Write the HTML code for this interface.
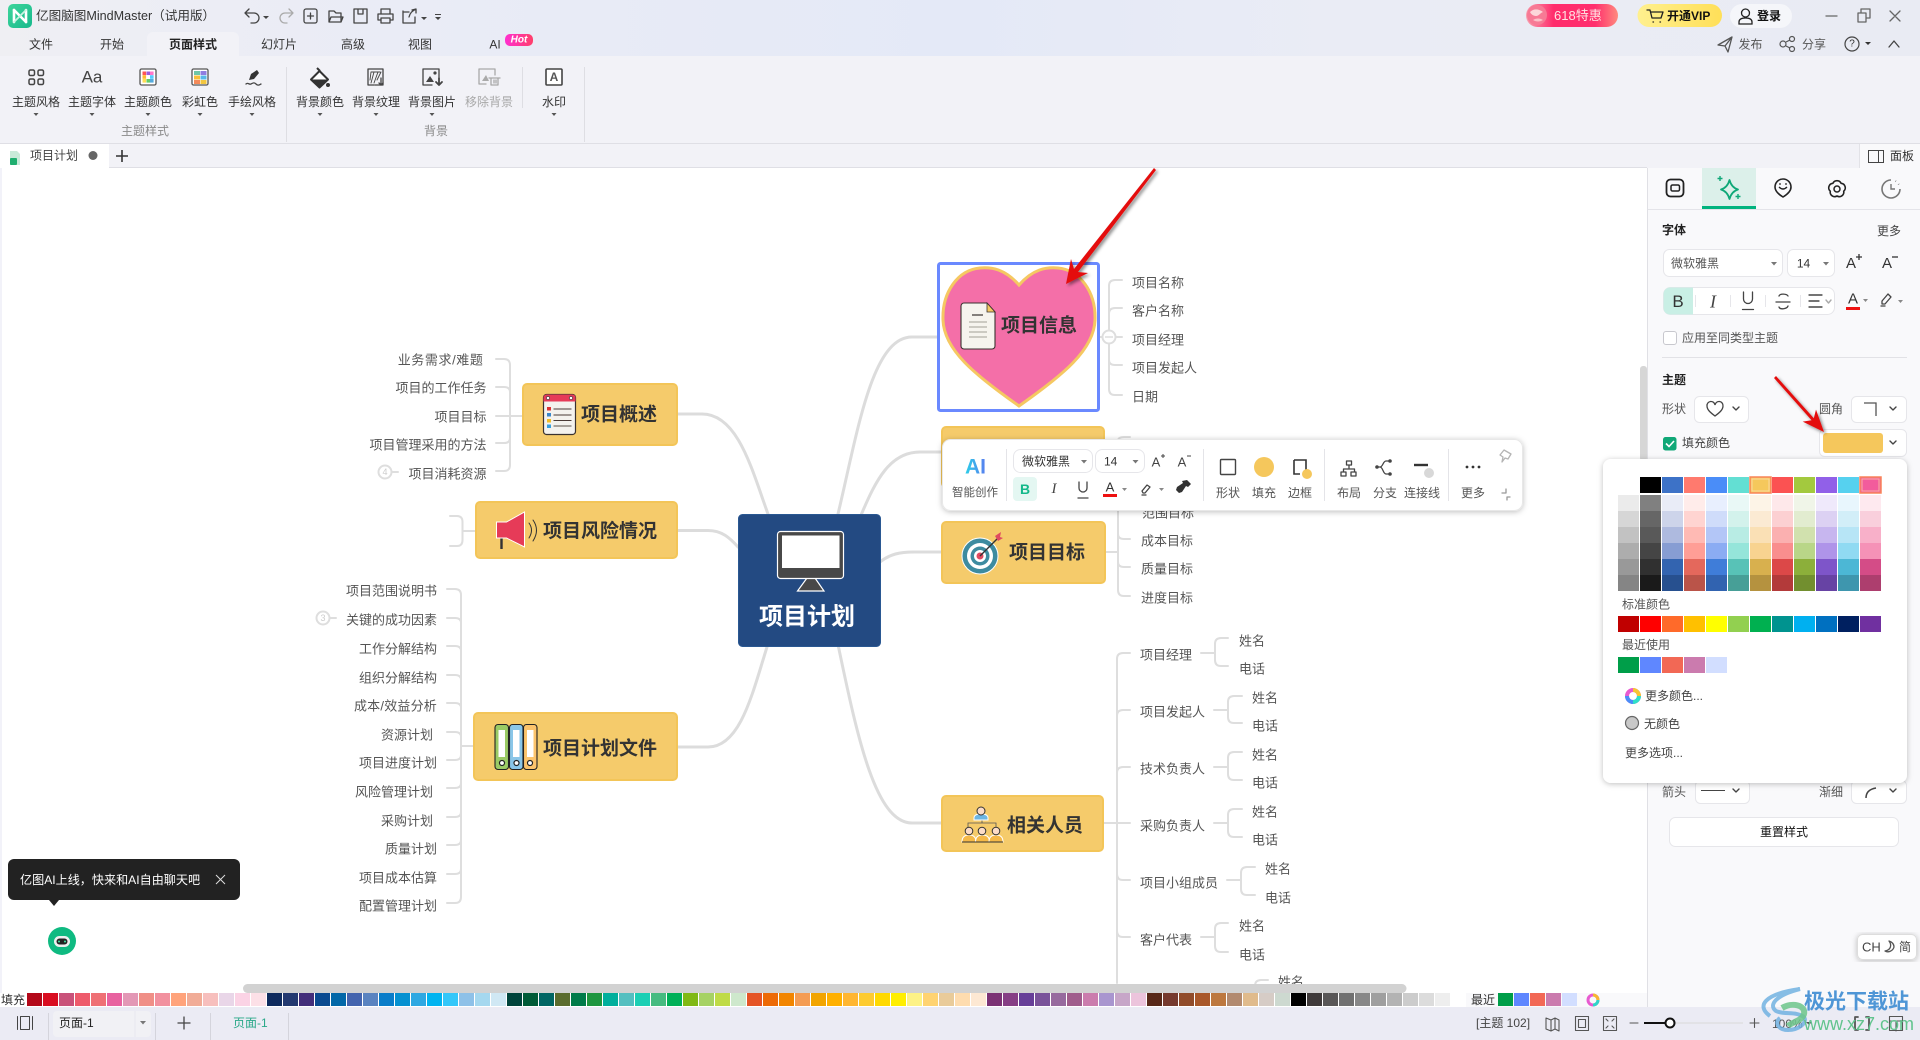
<!DOCTYPE html>
<html><head><meta charset="utf-8"><title>亿图脑图MindMaster</title>
<style>
html,body{margin:0;padding:0;width:1920px;height:1040px;overflow:hidden;background:#fff}
svg{display:block;font-family:"Liberation Sans","Noto Sans CJK SC",sans-serif}
text{dominant-baseline:central;font-size:12px;fill:#333;white-space:pre}
.mid{text-anchor:middle}.end{text-anchor:end}
.b{font-weight:bold}
.m{font-size:13px;fill:#555;transform:translateY(.8px)}
.n{font-size:19px;font-weight:bold;fill:#333;transform:translateY(1px)}
.l{fill:none;stroke:#dcdcdc;stroke-width:3;stroke-linecap:round}
.k{fill:none;stroke:#dedede;stroke-width:2;stroke-linecap:round}
.i{fill:none;stroke:#444;stroke-width:1.3;stroke-linecap:round;stroke-linejoin:round}
.node{fill:#f5cb6b;stroke:#f3c558;stroke-width:2}
.c1{width:15px;height:13px}
.p{width:21px;height:16px}
.ctl{fill:#fff;stroke:#e6e6ea}
.chev{fill:none;stroke:#444;stroke-width:1.4;stroke-linecap:round;stroke-linejoin:round}
</style></head><body>
<svg width="1920" height="1040" viewBox="0 0 1920 1040" xmlns="http://www.w3.org/2000/svg">
<defs>
<linearGradient id="tb" x1="0" x2="1" y1="0" y2="0"><stop offset="0" stop-color="#efeff3"/><stop offset=".1" stop-color="#ecedf5"/><stop offset=".5" stop-color="#e4e9f7"/><stop offset=".7" stop-color="#eaecf5"/><stop offset="1" stop-color="#e9ebf3"/></linearGradient>
<linearGradient id="lg" x1="0" x2="1" y1="0" y2="1"><stop offset="0" stop-color="#3fd59b"/><stop offset="1" stop-color="#16b98c"/></linearGradient>
<linearGradient id="hot" x1="0" x2="1"><stop offset="0" stop-color="#ff2fd0"/><stop offset="1" stop-color="#ff3f6a"/></linearGradient>
<linearGradient id="b618" x1="0" x2="1"><stop offset="0" stop-color="#f8a0ae"/><stop offset=".3" stop-color="#ff2c6c"/><stop offset=".75" stop-color="#ff2f6d"/><stop offset="1" stop-color="#ff8a7e"/></linearGradient>
<linearGradient id="vip" x1="0" x2="1"><stop offset="0" stop-color="#fff08f"/><stop offset="1" stop-color="#ffdf58"/></linearGradient>
<linearGradient id="ai" x1="0" x2="1"><stop offset="0" stop-color="#2bd0e8"/><stop offset="1" stop-color="#5a7cf0"/></linearGradient>
<filter id="sh" x="-10%" y="-10%" width="120%" height="120%"><feDropShadow dx="0" dy="1" stdDeviation="3" flood-color="#000" flood-opacity=".25"/></filter>
<filter id="ar" x="-30%" y="-30%" width="160%" height="160%"><feDropShadow dx="2" dy="2" stdDeviation="1.500" flood-color="#000" flood-opacity=".45"/></filter>
</defs>

<!-- backgrounds -->
<rect width="1920" height="56" fill="url(#tb)"/>
<rect y="56" width="1920" height="87" fill="#f2f2f7"/>
<rect y="143" width="1920" height="25" fill="#f2f2f7"/>
<rect y="143" width="1920" height="1" fill="#dfdfe5"/>
<rect x="0" y="168" width="1648" height="839" fill="#fff"/>
<rect x="0" y="168" width="2" height="839" fill="#f2f2f9"/>
<rect x="1648" y="168" width="272" height="839" fill="#f9f9fb"/>
<rect x="1647" y="168" width="1" height="839" fill="#e0e0e5"/>
<rect y="167" width="1647" height="1" fill="#dfdfe5"/>

<!-- title -->
<rect x="8" y="4" width="24" height="24" rx="5" fill="url(#lg)"/>
<path d="M14 22V10M26 22V10" stroke="#fff" stroke-width="2.600" stroke-linecap="round"/><path d="M14 10l12 12" stroke="#fff" stroke-width="2.600" stroke-linecap="round"/><path d="M26 10l-12 12" stroke="#c9f3e2" stroke-width="1.800" stroke-linecap="round"/>
<text x="36" y="16" style="font-size:12.600px">亿图脑图MindMaster（试用版）</text>
<path class="i" d="M248 12l-4 4 4 4M244 16h9a5 5 0 0 1 0 10h-3" transform="translate(1 -3)"/>
<path d="M263 16h6l-3 3z" fill="#444"/>
<path class="i" style="stroke:#aaa" d="M289 12l4 4-4 4M293 16h-8a5 5 0 0 0 0 10h2" transform="translate(0 -3)"/>
<g class="i"><rect x="304" y="9" width="13" height="14" rx="2"/><path d="M310.500 13v6M307.500 16h6"/>
<path d="M329 22V11h5l2 2h5v9zM329 22l2-5h12l-2 5"/>
<path d="M354 9h13v14h-13zM358 9v5h5V9"/>
<path d="M381 14V9h9v5M378 14h15v6h-3M381 20h-3v-6M381 18h9v5h-9z"/>
<path d="M404 12h5M416 9l-4 1M416 9v4M403 11v12h12v-6M409 17c1-4 3-6 7-8"/></g>
<path d="M421 17h6l-3 3zM435 14h6v1h-6zM435 17h6l-3 3z" fill="#444"/>

<!-- tabs -->
<path d="M147 56V38a6 6 0 0 1 6-6h80a6 6 0 0 1 6 6v18z" fill="#f2f2f7"/>
<text class="mid" x="41" y="44.500">文件</text>
<text class="mid" x="112" y="44.500">开始</text>
<text class="mid b" x="193" y="44.500" style="fill:#222">页面样式</text>
<text class="mid" x="279" y="44.500">幻灯片</text>
<text class="mid" x="353" y="44.500">高级</text>
<text class="mid" x="420" y="44.500">视图</text>
<text class="mid" x="495" y="44.500">AI</text>
<rect x="505" y="34" width="28" height="12" rx="5" fill="url(#hot)"/>
<text class="mid b" x="519" y="40" style="font-size:10px;fill:#fff;font-style:italic">Hot</text>

<!-- top right -->
<rect x="1526" y="4" width="92" height="23" rx="11.500" fill="url(#b618)"/>
<circle cx="1537" cy="15" r="10" fill="#f77a95"/><path d="M1530 12c4-4 9-3 13 0-3 1-4 4-7 4s-5-2-6-4z" fill="#fcd6d9"/><path d="M1533 20c3-2 7-2 10 0-3 2-7 2-10 0z" fill="#fcc0c8"/>
<text x="1554" y="15.500" style="font-size:13px;fill:#ffe3e3">618特惠</text>
<rect x="1637.500" y="4" width="84.500" height="23" rx="11.500" fill="url(#vip)"/>
<path class="i" style="stroke:#222" d="M1647 10h3l2 8h9l2-6h-12M1653 22h.5M1660 22h.5"/>
<text class="b" x="1667" y="16" style="fill:#111">开通VIP</text>
<rect x="1730" y="4" width="62" height="24" rx="12" fill="#f5f6fa"/>
<circle cx="1745.500" cy="13" r="4" fill="none" stroke="#222" stroke-width="1.300"/><path d="M1739 24v-2c0-3 3-4 6.500-4s6.500 1 6.500 4v2z" fill="none" stroke="#222" stroke-width="1.300"/>
<text class="mid b" x="1769" y="16" style="fill:#111">登录</text>
<path class="i" style="stroke:#666" d="M1826 16h11M1858 13h8v9h-8zM1861 13v-4h9v9h-4M1890 11l10 10M1900 11l-10 10"/>
<path class="i" style="stroke:#555" d="M1718 45l14-8-4 15-3-6zM1725 46l7-9"/>
<text class="mid" x="1750.500" y="44.500" style="fill:#555">发布</text>
<g fill="none" stroke="#555" stroke-width="1.200"><circle cx="1783" cy="44" r="3"/><circle cx="1792" cy="39" r="2.500"/><circle cx="1792" cy="49" r="2.500"/><path d="M1786 42l4-2M1786 46l4 2"/></g>
<text class="mid" x="1814" y="44.500" style="fill:#555">分享</text>
<circle cx="1852" cy="44" r="7" fill="none" stroke="#444" stroke-width="1.200"/><text class="mid" x="1852" y="44" style="font-size:10px">?</text>
<path d="M1865 42h6l-3 3z" fill="#333"/>
<path class="i" d="M1889 47l5-6 5 6"/>

<!-- ribbon icons -->
<g class="i" style="stroke-width:1.500">
<rect x="29" y="70" width="5.500" height="5.500" rx="1.500"/><rect x="38" y="70" width="5.500" height="5.500" rx="1.500"/><rect x="29" y="79" width="5.500" height="5.500" rx="1.500"/><rect x="38" y="79" width="5.500" height="5.500" rx="1.500"/>
</g>
<text class="mid" x="92" y="77" style="font-size:17px;fill:#444">Aa</text>
<rect x="140" y="69" width="16" height="16" rx="1.500" fill="#fff" stroke="#555" stroke-width="1.300"/>
<g>
<rect x="142.500" y="71.500" width="3.600" height="3.600" fill="#f55"/><rect x="146.500" y="71.500" width="3.600" height="3.600" fill="#9c5ce0"/><rect x="150" y="71.500" width="3.600" height="3.600" fill="#f7c"/>
<rect x="142.500" y="75.200" width="3.600" height="3.600" fill="#fb3"/><rect x="146.500" y="75.200" width="3.600" height="3.600" fill="#fff"/><rect x="150" y="75.200" width="3.600" height="3.600" fill="#5cf"/>
<rect x="142.500" y="79" width="3.600" height="3.600" fill="#fd5"/><rect x="146.500" y="79" width="3.600" height="3.600" fill="#6c6"/><rect x="150" y="79" width="3.600" height="3.600" fill="#5ad"/>
</g>
<rect x="192" y="69" width="16" height="16" rx="1.500" fill="#fff" stroke="#555" stroke-width="1.300"/>
<rect x="194" y="71" width="6" height="4" fill="#6dc6a8"/><rect x="200.500" y="71" width="6" height="4" fill="#8f7de0"/><rect x="194" y="75.500" width="6" height="4" fill="#f7bf3a"/><rect x="200.500" y="75.500" width="6" height="4" fill="#58b8e8"/><rect x="194" y="80" width="6" height="4" fill="#f58a5a"/><rect x="200.500" y="80" width="6" height="4" fill="#f3c63f"/>
<path d="M249 80l2-6 6-4 2 3-5 6z" fill="#333"/><path class="i" d="M246 84c2-2 3 1 5 0s3-2 5 0 3 1 5 0"/>
<path d="M319.500 71l8.500 8.500-8.500 8-8.500-8z" fill="#fff" stroke="#333" stroke-width="2" stroke-linejoin="round"/><path d="M311 79.500h17l-8.500 8z" fill="#333"/><path d="M317 68l3 3" stroke="#333" stroke-width="2"/><circle cx="328" cy="85" r="2" fill="#333"/>
<path class="i" d="M368 69h15v16h-8M368 69v16h6"/><path d="M371 72l9 0M371 72l-1 8M374 72l-3 11M378 72l-4 11M381 72l-4 8" class="i" style="stroke-width:.9"/><path class="i" d="M381 78v7M379 83l2 2 2-2"/>
<path class="i" d="M423 69h16v8M423 69v16h9"/><path d="M426 82l4-6 4 6z" fill="#444"/><circle cx="435" cy="73" r="1.600" fill="#444"/><path class="i" style="stroke-width:1.800" d="M439 78v7M436 82l3 3 3-3"/>
<path class="i" style="stroke:#a8a8a8" d="M479 69h16v6M479 69v15h7"/><path d="M482 81l4-6 3 6z" fill="#aaa"/><path class="i" style="stroke:#a8a8a8" d="M489 78h11M491 78v7h7v-7M494 80v3M496 80v3"/>
<rect x="546" y="69" width="16" height="16" rx="1" fill="#fff" stroke="#444" stroke-width="1.600"/>
<text class="mid b" x="554" y="77" style="font-size:12px;fill:#555">A</text>

<g style="font-size:12px">
<text class="mid" x="36" y="102">主题风格</text><text class="mid" x="92" y="102">主题字体</text><text class="mid" x="148" y="102">主题颜色</text><text class="mid" x="200" y="102">彩虹色</text><text class="mid" x="252" y="102">手绘风格</text>
<text class="mid" x="320" y="102">背景颜色</text><text class="mid" x="376" y="102">背景纹理</text><text class="mid" x="432" y="102">背景图片</text><text class="mid" x="489" y="102" style="fill:#a8a8a8">移除背景</text><text class="mid" x="554" y="102">水印</text>
<text class="mid" x="145" y="131" style="fill:#8a8a8a">主题样式</text><text class="mid" x="436" y="131" style="fill:#8a8a8a">背景</text>
</g>
<path fill="#555" d="M33.500 113h5l-2.500 3zM89.500 113h5l-2.500 3zM145.500 113h5l-2.500 3zM197.500 113h5l-2.500 3zM249.500 113h5l-2.500 3zM317.500 113h5l-2.500 3zM373.500 113h5l-2.500 3zM429.500 113h5l-2.500 3zM551.500 113h5l-2.500 3z"/>
<path stroke="#dedee3" d="M286.500 67v75M522.500 67v41M584.500 67v75"/>

<!-- doc tab -->
<rect x="0" y="144" width="109" height="24" fill="#fff"/>
<path d="M10 151h7l3 3v11H10z" fill="#c9ead9"/><rect x="10" y="158" width="7" height="7" rx="1" fill="#1fae6f"/>
<text x="30" y="155.500" style="fill:#444">项目计划</text>
<circle cx="93" cy="155.500" r="4.500" fill="#666"/>
<path d="M122 150v12M116 156h12" stroke="#333" stroke-width="1.600"/>
<rect x="1859" y="144" width="61" height="24" fill="#f9f9fb"/><rect x="1859" y="144" width="1" height="24" fill="#e2e2e7"/>
<rect x="1868.500" y="150.500" width="15" height="12" fill="none" stroke="#444"/><path d="M1878.500 150.500v12" stroke="#444"/>
<text x="1890" y="156" style="fill:#333">面板</text>

<!-- connectors main -->
<path class="l" d="M678 414H702C738 414 752 470 768 514"/>
<path class="l" d="M678 530.500H708C722 530.500 730 538 738 547"/>
<path class="l" d="M678 747H708C740 747 752 695 767 647"/>
<path class="l" d="M838 514C858 430 872 337 912 337H942"/>
<path class="l" d="M861.500 514C876 480 890 452 920 452H942"/>
<path class="l" d="M880 562C890 554 900 552 914 552H942"/>
<path class="l" d="M838.500 647C858 740 876 823 912 823H942"/>

<!-- left branches -->
<g>
<path class="k" d="M496 359H504Q510 359 510 365V465Q510 471 504 471H496M496 387H504Q510 387 510 392M496 416H522M496 443H504Q510 443 510 438"/>
<circle cx="385" cy="472" r="6.500" fill="#fff" stroke="#dedede" stroke-width="2"/><text class="mid" x="385" y="472" style="font-size:9px;fill:#ccc">4</text><path class="k" d="M391.500 472H398"/>
<text class="m end" x="483.500" y="359" style="letter-spacing:.6px">业务需求/难题</text>
<text class="m end" x="486.500" y="387">项目的工作任务</text>
<text class="m end" x="486.500" y="416">项目目标</text>
<text class="m end" x="486.500" y="444">项目管理采用的方法</text>
<text class="m end" x="486.500" y="473">项目消耗资源</text>
<path class="k" d="M450 516H457Q462.500 516 462.500 522V540Q462.500 546 457 546H450M462.500 531H475"/>
<path class="k" d="M447 589H455Q461 589 461 595V897Q461 903 455 903H447M447 618H455Q461 618 461 623M447 646H455Q461 646 461 651M447 675H455Q461 675 461 680M447 703H455Q461 703 461 708M447 732H455Q461 732 461 737M447 760H455Q461 760 461 755M447 788H455Q461 788 461 783M447 817H455Q461 817 461 812M447 845H455Q461 845 461 840M447 874H455Q461 874 461 869M461 746H473"/>
<circle cx="323" cy="618" r="6.500" fill="#fff" stroke="#dedede" stroke-width="2"/><text class="mid" x="323" y="618" style="font-size:9px;fill:#ccc">3</text><path class="k" d="M329.500 618H336"/>
<text class="m end" x="437" y="590">项目范围说明书</text>
<text class="m end" x="437" y="619">关键的成功因素</text>
<text class="m end" x="437" y="648">工作分解结构</text>
<text class="m end" x="437" y="677">组织分解结构</text>
<text class="m end" x="437" y="705" style="letter-spacing:.2px">成本/效益分析</text>
<text class="m end" x="433" y="734">资源计划</text>
<text class="m end" x="437" y="762">项目进度计划</text>
<text class="m end" x="433" y="791">风险管理计划</text>
<text class="m end" x="433" y="820">采购计划</text>
<text class="m end" x="437" y="848">质量计划</text>
<text class="m end" x="437" y="877">项目成本估算</text>
<text class="m end" x="437" y="905">配置管理计划</text>
</g>

<!-- right branches -->
<path class="k" d="M1122 280H1115Q1109 280 1109 286V389Q1109 395 1115 395H1122M1122 308H1115Q1109 308 1109 314M1122 337H1095M1122 365H1115Q1109 365 1109 360"/>
<circle cx="1109" cy="337" r="6.500" fill="#fff" stroke="#dedede" stroke-width="2"/><path d="M1105 337h8" stroke="#ccc"/>
<text class="m" x="1132" y="282">项目名称</text><text class="m" x="1132" y="310">客户名称</text><text class="m" x="1132" y="339">项目经理</text><text class="m" x="1132" y="367">项目发起人</text><text class="m" x="1132" y="396">日期</text>

<path class="k" d="M1118 511V590Q1118 596 1124 596H1130M1130 539H1124Q1118 539 1118 534M1130 567H1124Q1118 567 1118 562M1105 552H1118"/>
<path class="k" d="M1118 445V441Q1118 437 1124 437H1130"/>
<text class="m" x="1142" y="512">范围目标</text><text class="m" x="1141" y="540">成本目标</text><text class="m" x="1141" y="568">质量目标</text><text class="m" x="1141" y="597">进度目标</text>

<path class="k" d="M1104 823H1130M1130 653H1123Q1117 653 1117 659V983M1130 710H1123Q1117 710 1117 716M1130 767H1123Q1117 767 1117 773M1130 880H1123Q1117 880 1117 874M1130 937H1123Q1117 937 1117 931"/>
<text class="m" x="1140" y="654">项目经理</text><text class="m" x="1140" y="711">项目发起人</text><text class="m" x="1140" y="768">技术负责人</text><text class="m" x="1140" y="825">采购负责人</text><text class="m" x="1140" y="882">项目小组成员</text><text class="m" x="1140" y="939">客户代表</text>
<path class="k" d="M1201 653H1215M1228 638H1221Q1215 638 1215 644V660Q1215 666 1221 666H1228"/>
<path class="k" d="M1214 710H1228M1242 696H1234Q1228 696 1228 702V717Q1228 723 1234 723H1242"/>
<path class="k" d="M1214 767H1228M1242 752H1234Q1228 752 1228 758V774Q1228 780 1234 780H1242"/>
<path class="k" d="M1214 823H1228M1242 809H1234Q1228 809 1228 815V831Q1228 837 1234 837H1242"/>
<path class="k" d="M1227 880H1241M1255 867H1247Q1241 867 1241 873V889Q1241 895 1247 895H1255"/>
<path class="k" d="M1201 937H1215M1228 923H1221Q1215 923 1215 929V946Q1215 952 1221 952H1228"/>
<path class="k" d="M1255 986Q1255 980 1261 980H1268"/>
<text class="m" x="1239" y="640">姓名</text><text class="m" x="1239" y="668">电话</text>
<text class="m" x="1252" y="697">姓名</text><text class="m" x="1252" y="725">电话</text>
<text class="m" x="1252" y="754">姓名</text><text class="m" x="1252" y="782">电话</text>
<text class="m" x="1252" y="811">姓名</text><text class="m" x="1252" y="839">电话</text>
<text class="m" x="1265" y="868">姓名</text><text class="m" x="1265" y="897">电话</text>
<text class="m" x="1239" y="925">姓名</text><text class="m" x="1239" y="954">电话</text>
<text class="m" x="1278" y="981">姓名</text>

<!-- center node -->
<rect x="738.500" y="514.500" width="142" height="132" rx="4" fill="#234a82" stroke="#2a5892"/>
<path d="M807 578l-9.500 13h26.500L815 578z" fill="#484848" stroke="#fff" stroke-width="1.200"/>
<rect x="777.500" y="531.500" width="66" height="47" rx="3" fill="#484848" stroke="#fff" stroke-width="1.200"/>
<rect x="782" y="535.500" width="57.500" height="32.500" fill="#fff"/>
<text class="mid b" x="807" y="617" style="font-size:24px;fill:#fff">项目计划</text>

<!-- nodes -->
<rect class="node" x="523" y="384" width="154" height="61" rx="4"/>
<rect x="543.500" y="394.500" width="32" height="40" rx="3" fill="#f4f2ee" stroke="#3a3230" stroke-width="1.200"/>
<path d="M543.500 401.500v-4a3 3 0 0 1 3-3h26a3 3 0 0 1 3 3v4z" fill="#e63b58"/>
<circle cx="548" cy="398" r="1.600" fill="#fff" stroke="#333" stroke-width=".6"/><circle cx="571" cy="398" r="1.600" fill="#fff" stroke="#333" stroke-width=".6"/>
<path d="M553.500 409h18M553.500 415h18M553.500 420.500h18" stroke="#4a3b36" stroke-width="1.100"/><path d="M553.500 426h18" stroke="#8f8880" stroke-width="1.400"/>
<rect x="547" y="407" width="4" height="3.500" fill="#d33"/><rect x="547" y="413" width="4" height="3.500" fill="#3a87c9"/><rect x="547" y="419" width="4" height="3.500" fill="#f2bd28"/><rect x="547" y="424.500" width="4" height="3.500" fill="#37a0dd"/>
<text class="n" x="581" y="414">项目概述</text>

<rect class="node" x="476" y="502" width="201" height="56" rx="4"/>
<path d="M501.500 537v12" stroke="#333" stroke-width="2.400"/>
<path d="M496.500 522h10l18-10v35l-18-9h-10z" fill="#e63b58" stroke="#fff"/>
<path class="i" style="stroke:#333;stroke-width:1" d="M529 523q5 7 0 15M533 520q7 10 0 21"/>
<text class="n" x="543" y="530.500">项目风险情况</text>

<rect class="node" x="474" y="713" width="203" height="67" rx="4"/>
<g stroke="#222" stroke-width="1.100"><rect x="495" y="724.500" width="13.500" height="45" rx="3" fill="#9bcb65"/><rect x="509.500" y="724.500" width="13.500" height="45" rx="3" fill="#8ac6e8"/><rect x="523.500" y="724.500" width="13.500" height="45" rx="3" fill="#fcc46c"/></g>
<rect x="498.500" y="730" width="6.500" height="27" fill="#fff"/><rect x="513" y="730" width="6.500" height="27" fill="#fff"/><rect x="527" y="730" width="6.500" height="27" fill="#fff"/>
<g fill="#fff" stroke="#222" stroke-width="1.200"><circle cx="502" cy="763" r="2.500"/><circle cx="516.500" cy="763" r="2.500"/><circle cx="530" cy="763" r="2.500"/></g>
<text class="n" x="543" y="748">项目计划文件</text>

<rect class="node" x="942" y="427" width="162" height="60" rx="4"/>
<rect class="node" x="942" y="522" width="163" height="61" rx="4"/>
<circle cx="980" cy="556" r="18" fill="#3d8ba0" stroke="#fff" stroke-width="1"/><circle cx="980" cy="556" r="13" fill="#fff"/><circle cx="980" cy="556" r="9.500" fill="#3d8ba0"/><circle cx="980" cy="556" r="6" fill="#fff"/><circle cx="980" cy="556" r="3.500" fill="#e04a60"/>
<path d="M980 556l19-19" stroke="#333" stroke-width="1.400"/><path d="M995 536l6-4-1 5 3 1-5 3z" fill="#e04a60"/>
<text class="n" x="1009" y="552">项目目标</text>

<rect class="node" x="942" y="796" width="161" height="55" rx="4"/>
<path d="M968 829v-6h28v6M982 818v5" fill="none" stroke="#555" stroke-width=".8"/>
<path d="M974 820v-2c0-3 3-4 7-4s7 1 7 4v2z" fill="#6db6e3" stroke="#fff"/>
<circle cx="981" cy="811" r="4" fill="#fcdcc6" stroke="#333"/>
<g stroke="#fff"><path d="M962 842c0-5 3-7 7-7s7 2 7 7z" fill="#f5b948"/><path d="M975.500 842c0-5 3-7 7-7s7 2 7 7z" fill="#f5b948"/><path d="M989 842c0-5 3-7 7-7s7 2 7 7z" fill="#f5b948"/></g>
<path d="M962 842h41" stroke="#333"/>
<g fill="#fcdcc6" stroke="#333"><circle cx="969" cy="831" r="3.800"/><circle cx="982" cy="831" r="3.800"/><circle cx="996" cy="831" r="3.800"/></g>
<text class="n" x="1007" y="825">相关人员</text>

<!-- selected heart -->
<rect x="938.500" y="263.500" width="160" height="147" rx="2" fill="#fff" stroke="#6a89ff" stroke-width="3"/>
<path d="M1019 285C1005 269 992 267 980 268C958 270 942 292 943 320C944 350 975 375 1019 406C1063 375 1094 350 1095 320C1096 292 1080 270 1058 268C1046 267 1033 269 1019 285Z" fill="#f46fa8" stroke="#f5c862" stroke-width="3"/>
<path d="M961 306a3 3 0 0 1 3-3h23l8 9v34a3 3 0 0 1-3 3h-28a3 3 0 0 1-3-3z" fill="#f6f4ee" stroke="#3a3230" stroke-width="1.100"/>
<path d="M987 303l8 9h-8z" fill="#f5c862" stroke="#3a3230" stroke-width=".8"/>
<path d="M972 315h11" stroke="#3a3230" stroke-width="1.200"/>
<path d="M969 322h18M969 327h18M969 332h18M969 337h18" stroke="#b4b0a8" stroke-width="1.300"/>
<text class="n" x="1001" y="325">项目信息</text>

<!-- canvas scrollbars -->
<rect x="1640" y="366" width="7" height="95" rx="3" fill="#d6d6d6"/>
<rect x="243" y="984" width="1163.500" height="9" rx="4.500" fill="#d2d2d2"/>

<!-- color bar -->
<rect x="0" y="993" width="1647" height="14" fill="#fff"/>
<text x="1" y="1000" style="font-size:12px">填充</text>
<g>
<rect class="c1" y="993" x="27" fill="#b30819"/><rect class="c1" y="993" x="43" fill="#d90d21"/><rect class="c1" y="993" x="59" fill="#c9527a"/><rect class="c1" y="993" x="75" fill="#ee5b6c"/><rect class="c1" y="993" x="91" fill="#ef7075"/><rect class="c1" y="993" x="107" fill="#e862a0"/><rect class="c1" y="993" x="123" fill="#e398b6"/><rect class="c1" y="993" x="139" fill="#f08f87"/><rect class="c1" y="993" x="155" fill="#f2919f"/><rect class="c1" y="993" x="171" fill="#ffa37b"/><rect class="c1" y="993" x="187" fill="#f1ac97"/><rect class="c1" y="993" x="203" fill="#f7bfbd"/><rect class="c1" y="993" x="219" fill="#e9d6e8"/><rect class="c1" y="993" x="235" fill="#fbd3e5"/><rect class="c1" y="993" x="251" fill="#fce0e7"/>
<rect class="c1" y="993" x="267" fill="#0e2a5d"/><rect class="c1" y="993" x="283" fill="#233970"/><rect class="c1" y="993" x="299" fill="#432e7a"/><rect class="c1" y="993" x="315" fill="#0a4a90"/><rect class="c1" y="993" x="331" fill="#0368a8"/><rect class="c1" y="993" x="347" fill="#4464ae"/><rect class="c1" y="993" x="363" fill="#5a83c0"/><rect class="c1" y="993" x="379" fill="#0a7dc9"/><rect class="c1" y="993" x="395" fill="#0591d1"/><rect class="c1" y="993" x="411" fill="#2ea8e2"/><rect class="c1" y="993" x="427" fill="#00b4f0"/><rect class="c1" y="993" x="443" fill="#33c7f9"/><rect class="c1" y="993" x="459" fill="#8ec1e8"/><rect class="c1" y="993" x="475" fill="#a5d8ef"/><rect class="c1" y="993" x="491" fill="#d0e8f4"/>
<rect class="c1" y="993" x="507" fill="#00443b"/><rect class="c1" y="993" x="523" fill="#005b37"/><rect class="c1" y="993" x="539" fill="#016664"/><rect class="c1" y="993" x="555" fill="#5b6c2e"/><rect class="c1" y="993" x="571" fill="#007b49"/><rect class="c1" y="993" x="587" fill="#1e963f"/><rect class="c1" y="993" x="603" fill="#00af9c"/><rect class="c1" y="993" x="619" fill="#54bfc0"/><rect class="c1" y="993" x="635" fill="#1bcfb4"/><rect class="c1" y="993" x="651" fill="#46bb80"/><rect class="c1" y="993" x="667" fill="#00b058"/><rect class="c1" y="993" x="683" fill="#80b915"/><rect class="c1" y="993" x="699" fill="#a6d264"/><rect class="c1" y="993" x="715" fill="#bfdb46"/><rect class="c1" y="993" x="731" fill="#cee8cc"/>
<rect class="c1" y="993" x="747" fill="#e55426"/><rect class="c1" y="993" x="763" fill="#ed6a06"/><rect class="c1" y="993" x="779" fill="#f28500"/><rect class="c1" y="993" x="795" fill="#f49c53"/><rect class="c1" y="993" x="811" fill="#f2a400"/><rect class="c1" y="993" x="827" fill="#ffb000"/><rect class="c1" y="993" x="843" fill="#ffb631"/><rect class="c1" y="993" x="859" fill="#fdcb30"/><rect class="c1" y="993" x="875" fill="#ffd900"/><rect class="c1" y="993" x="891" fill="#ffee00"/><rect class="c1" y="993" x="907" fill="#fdf286"/><rect class="c1" y="993" x="923" fill="#ffd371"/><rect class="c1" y="993" x="939" fill="#e9cb9a"/><rect class="c1" y="993" x="955" fill="#fedcaf"/><rect class="c1" y="993" x="971" fill="#fde8d3"/>
<rect class="c1" y="993" x="987" fill="#7b3274"/><rect class="c1" y="993" x="1003" fill="#863e85"/><rect class="c1" y="993" x="1019" fill="#673f98"/><rect class="c1" y="993" x="1035" fill="#7a539a"/><rect class="c1" y="993" x="1051" fill="#976a9e"/><rect class="c1" y="993" x="1067" fill="#a05d8c"/><rect class="c1" y="993" x="1083" fill="#cb7cad"/><rect class="c1" y="993" x="1099" fill="#a996cf"/><rect class="c1" y="993" x="1115" fill="#c7a6c8"/><rect class="c1" y="993" x="1131" fill="#ecc4dc"/>
<rect class="c1" y="993" x="1147" fill="#582818"/><rect class="c1" y="993" x="1163" fill="#763a2e"/><rect class="c1" y="993" x="1179" fill="#914c2a"/><rect class="c1" y="993" x="1195" fill="#a9582a"/><rect class="c1" y="993" x="1211" fill="#bd783f"/><rect class="c1" y="993" x="1227" fill="#b28a6f"/><rect class="c1" y="993" x="1243" fill="#e0bb8c"/><rect class="c1" y="993" x="1259" fill="#d6ccc6"/><rect class="c1" y="993" x="1275" fill="#cdd9d0"/>
<rect class="c1" y="993" x="1291" fill="#000"/><rect class="c1" y="993" x="1307" fill="#3f3a3a"/><rect class="c1" y="993" x="1323" fill="#595757"/><rect class="c1" y="993" x="1339" fill="#717171"/><rect class="c1" y="993" x="1355" fill="#888"/><rect class="c1" y="993" x="1371" fill="#9f9f9f"/><rect class="c1" y="993" x="1387" fill="#b3b3b3"/><rect class="c1" y="993" x="1403" fill="#ccc"/><rect class="c1" y="993" x="1419" fill="#dcdcdc"/><rect class="c1" y="993" x="1435" fill="#eee"/>
</g>
<rect x="1466" y="993" width="181" height="14" fill="#f9f9fb"/>
<text x="1471" y="1000" style="font-size:12px">最近</text>
<rect class="c1" y="993" x="1498" fill="#009e49"/><rect class="c1" y="993" x="1514" fill="#5f87ff"/><rect class="c1" y="993" x="1530" fill="#f26855"/><rect class="c1" y="993" x="1546" fill="#cb7bae"/><rect class="c1" y="993" x="1562" fill="#d2deff"/>
<circle cx="1593" cy="1000" r="5" fill="none" stroke="#e85ad0" stroke-width="3"/><path d="M1593 995a5 5 0 0 1 5 5" fill="none" stroke="#f7b731" stroke-width="3"/><path d="M1598 1000a5 5 0 0 1-5 5" fill="none" stroke="#2fd6c9" stroke-width="3"/>

<!-- status bar -->
<rect y="1007" width="1920" height="33" fill="#ebebf4"/>
<path class="i" style="stroke:#444;stroke-width:1" d="M17.500 1016.500v13M32.500 1016.500v13M20.500 1016.500h9v13h-9z"/>
<path stroke="#d4d4dc" d="M48.500 1013v27M155.500 1013v27M210.500 1013v27M288.500 1013v27"/>
<rect x="53" y="1011" width="98" height="26" rx="4" fill="#f1f1f5"/><path d="M135 1011v26" stroke="#e8e8ee"/>
<text x="59" y="1023" style="fill:#222">页面-1</text>
<path d="M140 1021h6l-3 3.500z" fill="#777"/>
<path class="i" d="M184 1017v12M178 1023h12"/>
<text x="233" y="1023" style="fill:#2aa889">页面-1</text>
<text x="1476" y="1023" style="fill:#444">[主题 102]</text>
<g class="i" style="stroke:#555;stroke-width:1.100">
<path d="M1546 1018l5 2 4-2 4 2v11l-4-2-4 2-5-2zM1551 1020v11M1555 1018v11"/>
<rect x="1575.500" y="1016.500" width="13" height="14"/><rect x="1578.500" y="1019.500" width="7" height="8"/>
<rect x="1603.500" y="1016.500" width="13" height="14"/><path d="M1606 1019l2 2M1614 1019l-2 2M1606 1028l2-2M1614 1028l-2-2"/>
<path d="M1630 1023h8M1750 1023h9M1754.500 1018.500v9"/>
<path d="M1858 1017h-3v13h3M1866 1017h3v13h-3" stroke-width="1.800"/>
<rect x="1889.500" y="1016.500" width="13" height="14"/><path d="M1889.500 1021h13M1896 1021v10"/>
</g>
<path d="M1670 1023h73" stroke="#e2e2e6" stroke-width="2"/><path d="M1644 1023h26" stroke="#111" stroke-width="2"/>
<circle cx="1670" cy="1023" r="4.500" fill="#fff" stroke="#111" stroke-width="2"/>
<text x="1772" y="1024" style="fill:#555">100%</text><path d="M1806 1022h6l-3 3z" fill="#555"/>

<!-- right panel -->
<rect x="1702" y="168" width="54" height="38" fill="#dcf0ea"/><rect x="1702" y="206" width="54" height="3" fill="#00b37e"/>
<rect x="1648" y="209" width="272" height="1" fill="#e4e4e9"/>
<rect x="1666.500" y="179.500" width="17" height="17" rx="4" fill="none" stroke="#222" stroke-width="1.800"/><rect x="1671" y="185" width="8.500" height="6" rx="1.500" fill="none" stroke="#222" stroke-width="1.500"/>
<path d="M1729.500 180q2 7.500 8.500 9.500q-6.500 2-8.500 9.500q-2-7.500-8.500-9.500q6.500-2 8.500-9.500z" fill="none" stroke="#0fa878" stroke-width="1.800" stroke-linejoin="round"/>
<path d="M1720 176v5M1717.500 178.500h5M1738 194v5M1735.500 196.500h5" stroke="#0fa878" stroke-width="1.400"/>
<path d="M1783 197c-5-3-8-6-8-10a8 8 0 0 1 16 0c0 4-3 7-8 10z" fill="none" stroke="#222" stroke-width="1.600"/><path d="M1779 187q4 4 8 0" fill="none" stroke="#222" stroke-width="1.300"/><circle cx="1780" cy="184" r=".9" fill="#222"/><circle cx="1786" cy="184" r=".9" fill="#222"/>
<path d="M1832.900 183.300A4.500 4.500 0 0 1 1841.100 183.300A4.500 4.500 0 0 1 1843.700 191.200A4.500 4.500 0 0 1 1837 196A4.500 4.500 0 0 1 1830.300 191.200A4.500 4.500 0 0 1 1832.900 183.300Z" fill="none" stroke="#222" stroke-width="1.600" stroke-linejoin="round"/><circle cx="1837" cy="189" r="3" fill="none" stroke="#222" stroke-width="1.500"/>
<path d="M1891 180a9 9 0 1 0 9 9" fill="none" stroke="#777" stroke-width="1.600"/><path d="M1891 184v5h4" fill="none" stroke="#777" stroke-width="1.400"/><path d="M1895.500 181l.5.300M1898.500 184l.3.500" stroke="#777" stroke-width="1.800"/>

<text class="b" x="1662" y="230" style="fill:#222">字体</text>
<text class="end" x="1901" y="231" style="fill:#444">更多</text>
<rect class="ctl" x="1663.500" y="249.500" width="119" height="27" rx="6"/><text x="1671" y="263.500" style="fill:#555">微软雅黑</text><path d="M1771 262h6l-3 3.500z" fill="#777"/>
<rect class="ctl" x="1787.500" y="249.500" width="47" height="27" rx="6"/><text class="mid" x="1803.500" y="263.500" style="font-size:12px">14</text><path d="M1823 262h6l-3 3.500z" fill="#777"/>
<text class="mid" x="1851" y="263.500" style="font-size:15px;fill:#333">A</text><path d="M1856 257h6M1859 254v6" stroke="#333" stroke-width="1.300"/>
<text class="mid" x="1887" y="263.500" style="font-size:15px;fill:#333">A</text><path d="M1892 257h6" stroke="#333" stroke-width="1.300"/>
<rect class="ctl" x="1663.500" y="287.500" width="171" height="27" rx="7"/>
<path d="M1670 287.500h23v27h-23a6.500 6.500 0 0 1-6.500-6.500v-14a6.500 6.500 0 0 1 6.500-6.500z" fill="#c9efe5"/>
<text class="mid" x="1678" y="301.500" style="font-size:17px;fill:#333">B</text>
<text class="mid" x="1713" y="301.500" style="font-size:18px;font-style:italic;fill:#444;font-family:'Liberation Serif',serif">I</text>
<path d="M1743.500 292v7a4.500 4.500 0 0 0 9 0v-7M1742.500 309.500h11" class="i" style="stroke-width:1.300"/>
<path d="M1776 302h14M1788 296c-1-2-8-3-9 0M1779 307c1 3 8 2 9-1" class="i" style="stroke-width:1.300"/>
<path d="M1809 295h13M1809 301h10M1809 307h13" class="i" style="stroke-width:1.200;stroke:#222"/>
<path d="M1826 300l2.500 3 2.500-3" class="chev" style="stroke:#aaa"/>
<path stroke="#e6e6ea" d="M1695.500 295v12M1730.500 295v12M1765.500 295v12M1800.500 295v12"/>
<text class="mid" x="1853" y="299" style="font-size:15px;fill:#333">A</text><rect x="1846" y="307" width="14" height="3" fill="#e11"/>
<path d="M1863 299h5l-2.500 3z" fill="#888"/>
<path class="i" d="M1882 304l3 0 6-7-3-3-6 7zM1881 306h4"/>
<path d="M1898 300h5l-2.500 3z" fill="#888"/>
<rect x="1663.500" y="331.500" width="13" height="13" rx="2.500" fill="#fff" stroke="#c8c8ce"/>
<text x="1682" y="338" style="fill:#555">应用至同类型主题</text>
<path d="M1662 357.500h245" stroke="#e2e2e6"/>
<text class="b" x="1662" y="380" style="fill:#222">主题</text>
<text x="1662" y="409" style="fill:#555">形状</text>
<rect class="ctl" x="1694.500" y="396.500" width="54" height="26" rx="5"/>
<path d="M1715 416c-4-3-8-6-8-10a4 4 0 0 1 8-1a4 4 0 0 1 8 1c0 4-4 7-8 10z" fill="none" stroke="#444" stroke-width="1.300"/>
<path class="chev" d="M1733 407l3 3 3-3"/>
<text x="1819" y="409" style="fill:#555">圆角</text>
<rect class="ctl" x="1851.500" y="396.500" width="55" height="26" rx="5"/>
<path d="M1864 403h12v13" fill="none" stroke="#555" stroke-width="1.300"/>
<path class="chev" d="M1890 407l3 3 3-3"/>
<rect x="1663" y="437" width="13.500" height="13.500" rx="2.500" fill="#11a877"/><path d="M1666 443.500l3 3 5-5.500" fill="none" stroke="#fff" stroke-width="1.600"/>
<text x="1682" y="443" style="fill:#444">填充颜色</text>
<rect class="ctl" x="1819.500" y="429.500" width="87" height="27" rx="5"/>
<rect x="1823" y="433" width="60" height="20" rx="3" fill="#f5c75c"/>
<path class="chev" d="M1890 441l3 3 3-3"/>
<polygon points="1776,376 1774,378 1811.600,420.300 1802.700,421.600 1824,432 1816,409.600 1813.800,418.300" fill="#e40f0f" filter="url(#ar)"/>

<text x="1662" y="792" style="fill:#555">箭头</text>
<rect class="ctl" x="1695.500" y="780.500" width="54" height="23" rx="5"/><path d="M1701 790.500h24" stroke="#444"/><path class="chev" d="M1733 789l3 3 3-3"/>
<text x="1819" y="792" style="fill:#555">渐细</text>
<rect class="ctl" x="1851.500" y="780.500" width="55" height="23" rx="5"/><path d="M1866 798c0-6 4-9 10-10" fill="none" stroke="#444" stroke-width="1.500"/><path class="chev" d="M1890 789l3 3 3-3"/>
<rect class="ctl" x="1669.500" y="817.500" width="229" height="29" rx="6"/>
<text class="mid" x="1784" y="832" style="fill:#111">重置样式</text>

<rect x="1857.500" y="934.500" width="59" height="25" rx="5" fill="#fff" stroke="#ddd" filter="url(#sh)"/>
<text x="1862" y="947" style="fill:#444;font-size:13px">CH</text>
<path class="i" style="stroke:#555" d="M1889 941c3 4 2 9-4 10 3 2 8 0 9-4 0-3-2-5-5-6z"/>
<text x="1899" y="947" style="fill:#444">简</text>

<!-- popup -->
<rect x="1603" y="459" width="304" height="324" rx="8" fill="#fff" filter="url(#sh)"/>
<g>
<rect class="p" y="477" x="1640" fill="#000"/><rect class="p" y="477" x="1662" fill="#3d72c7"/><rect class="p" y="477" x="1684" fill="#ff7a6e"/><rect class="p" y="477" x="1706" fill="#4a8df8"/><rect class="p" y="477" x="1728" fill="#63dfd3"/><rect class="p" y="477" x="1750" fill="#f5c85c"/><rect class="p" y="477" x="1772" fill="#fb5252"/><rect class="p" y="477" x="1794" fill="#a3c93e"/><rect class="p" y="477" x="1816" fill="#9160e8"/><rect class="p" y="477" x="1838" fill="#56d1ef"/><rect class="p" y="477" x="1860" fill="#f25c9c"/>
<rect x="1750" y="477" width="21" height="16" fill="none" stroke="#f88458" stroke-width="1.500"/><rect x="1752" y="479" width="17" height="12" fill="none" stroke="#fbd9a0"/>
<rect x="1860" y="477" width="21" height="16" fill="none" stroke="#f88458" stroke-width="1.500"/><rect x="1862" y="479" width="17" height="12" fill="none" stroke="#fbb0a0"/>

<rect class="p" x="1618" y="495" fill="#ebebeb"/><rect class="p" x="1618" y="511" fill="#d6d6d6"/><rect class="p" x="1618" y="527" fill="#c2c2c2"/><rect class="p" x="1618" y="543" fill="#adadad"/><rect class="p" x="1618" y="559" fill="#999"/><rect class="p" x="1618" y="575" fill="#858585"/>
<rect class="p" x="1640" y="495" fill="#808080"/><rect class="p" x="1640" y="511" fill="#666"/><rect class="p" x="1640" y="527" fill="#595959"/><rect class="p" x="1640" y="543" fill="#454545"/><rect class="p" x="1640" y="559" fill="#303030"/><rect class="p" x="1640" y="575" fill="#1a1a1a"/>
<rect class="p" x="1662" y="495" fill="#e9ecf7"/><rect class="p" x="1662" y="511" fill="#cdd4ea"/><rect class="p" x="1662" y="527" fill="#aebadf"/><rect class="p" x="1662" y="543" fill="#879dd3"/><rect class="p" x="1662" y="559" fill="#3364b0"/><rect class="p" x="1662" y="575" fill="#27508f"/>
<rect class="p" x="1684" y="495" fill="#ffecea"/><rect class="p" x="1684" y="511" fill="#ffd4d1"/><rect class="p" x="1684" y="527" fill="#ffbab4"/><rect class="p" x="1684" y="543" fill="#ff9e96"/><rect class="p" x="1684" y="559" fill="#e4685c"/><rect class="p" x="1684" y="575" fill="#ba5449"/>
<rect class="p" x="1706" y="495" fill="#e8effe"/><rect class="p" x="1706" y="511" fill="#cfdcfa"/><rect class="p" x="1706" y="527" fill="#b3c6f7"/><rect class="p" x="1706" y="543" fill="#8bacf3"/><rect class="p" x="1706" y="559" fill="#3f7dd9"/><rect class="p" x="1706" y="575" fill="#3163b0"/>
<rect class="p" x="1728" y="495" fill="#e9f8f6"/><rect class="p" x="1728" y="511" fill="#d3f2ec"/><rect class="p" x="1728" y="527" fill="#b8ece4"/><rect class="p" x="1728" y="543" fill="#95e5da"/><rect class="p" x="1728" y="559" fill="#58c2b7"/><rect class="p" x="1728" y="575" fill="#479f97"/>
<rect class="p" x="1750" y="495" fill="#fdf4e7"/><rect class="p" x="1750" y="511" fill="#fbead3"/><rect class="p" x="1750" y="527" fill="#fae0b5"/><rect class="p" x="1750" y="543" fill="#f8d390"/><rect class="p" x="1750" y="559" fill="#d8b04e"/><rect class="p" x="1750" y="575" fill="#b5923f"/>
<rect class="p" x="1772" y="495" fill="#fee8ea"/><rect class="p" x="1772" y="511" fill="#fcd0d2"/><rect class="p" x="1772" y="527" fill="#fbb0b0"/><rect class="p" x="1772" y="543" fill="#f98e8e"/><rect class="p" x="1772" y="559" fill="#dc4848"/><rect class="p" x="1772" y="575" fill="#b33a3a"/>
<rect class="p" x="1794" y="495" fill="#f0f5e8"/><rect class="p" x="1794" y="511" fill="#e2ecd0"/><rect class="p" x="1794" y="527" fill="#d1e1ae"/><rect class="p" x="1794" y="543" fill="#b9d688"/><rect class="p" x="1794" y="559" fill="#8caf3a"/><rect class="p" x="1794" y="575" fill="#728f2f"/>
<rect class="p" x="1816" y="495" fill="#efe9fb"/><rect class="p" x="1816" y="511" fill="#dcd1f3"/><rect class="p" x="1816" y="527" fill="#c7b6ef"/><rect class="p" x="1816" y="543" fill="#af94e9"/><rect class="p" x="1816" y="559" fill="#7e55c9"/><rect class="p" x="1816" y="575" fill="#6743a4"/>
<rect class="p" x="1838" y="495" fill="#e8f6fd"/><rect class="p" x="1838" y="511" fill="#d2eef8"/><rect class="p" x="1838" y="527" fill="#b7e5f6"/><rect class="p" x="1838" y="543" fill="#90daf2"/><rect class="p" x="1838" y="559" fill="#4cb7d5"/><rect class="p" x="1838" y="575" fill="#3e96ae"/>
<rect class="p" x="1860" y="495" fill="#fee9ef"/><rect class="p" x="1860" y="511" fill="#f9cfdc"/><rect class="p" x="1860" y="527" fill="#f8b0c9"/><rect class="p" x="1860" y="543" fill="#f592b7"/><rect class="p" x="1860" y="559" fill="#d44c87"/><rect class="p" x="1860" y="575" fill="#ad3e6e"/>

<rect class="p" y="616" x="1618" fill="#c00000"/><rect class="p" y="616" x="1640" fill="#ff0000"/><rect class="p" y="616" x="1662" fill="#ff6a2a"/><rect class="p" y="616" x="1684" fill="#ffc000"/><rect class="p" y="616" x="1706" fill="#ffff00"/><rect class="p" y="616" x="1728" fill="#92d050"/><rect class="p" y="616" x="1750" fill="#00b050"/><rect class="p" y="616" x="1772" fill="#00938f"/><rect class="p" y="616" x="1794" fill="#00b0f0"/><rect class="p" y="616" x="1816" fill="#0070c0"/><rect class="p" y="616" x="1838" fill="#002060"/><rect class="p" y="616" x="1860" fill="#7030a0"/>
<rect class="p" y="657" x="1618" fill="#009e49"/><rect class="p" y="657" x="1640" fill="#5f87ff"/><rect class="p" y="657" x="1662" fill="#f26855"/><rect class="p" y="657" x="1684" fill="#cb7bae"/><rect class="p" y="657" x="1706" fill="#d2deff"/>
</g>
<text x="1622" y="604.500" style="fill:#555">标准颜色</text>
<text x="1622" y="645" style="fill:#555">最近使用</text>
<circle cx="1633" cy="696" r="6" fill="none" stroke="#e85ad0" stroke-width="4"/><path d="M1633 690a6 6 0 0 1 6 6" fill="none" stroke="#f7c531" stroke-width="4"/><path d="M1639 696a6 6 0 0 1-6 6" fill="none" stroke="#2fe0c9" stroke-width="4"/><path d="M1633 702a6 6 0 0 1-6-6" fill="none" stroke="#4a8df8" stroke-width="4"/>
<text x="1645" y="696" style="fill:#444">更多颜色...</text>
<circle cx="1632" cy="723" r="6.500" fill="#c8c8c8" stroke="#666" stroke-width="1.200"/>
<text x="1644" y="724" style="fill:#444">无颜色</text>
<text x="1625" y="753" style="fill:#444">更多选项...</text>

<!-- floating toolbar -->
<rect x="942.500" y="439.500" width="580" height="71" rx="8" fill="#fff" stroke="#e8e8e8" filter="url(#sh)"/>
<text class="mid b" x="975.500" y="467" style="font-size:21px;fill:url(#ai)">AI</text>
<text class="mid" x="975" y="493" style="font-size:11.500px;fill:#555">智能创作</text>
<path stroke="#e4e4e8" d="M1006.500 449v52M1203.500 449v52M1324.500 449v52M1448.500 449v52"/>
<rect x="1013.500" y="449.500" width="79" height="23" rx="7" fill="#fff" stroke="#e6e6ea"/><text x="1022" y="461.500" style="font-size:12px">微软雅黑</text><path d="M1081 460h6l-3 3.500z" fill="#777"/>
<rect x="1095.500" y="449.500" width="49" height="23" rx="7" fill="#fff" stroke="#e6e6ea"/><text x="1104" y="461.500" style="font-size:12px">14</text><path d="M1132.500 460h6l-3 3.500z" fill="#777"/>
<text class="mid" x="1156" y="462" style="font-size:13px;fill:#444">A</text><path d="M1161 456h4M1163 454v4" stroke="#444"/>
<text class="mid" x="1182" y="462" style="font-size:13px;fill:#444">A</text><path d="M1187 456h4" stroke="#444"/>
<rect x="1013" y="477" width="24" height="24" rx="4" fill="#e4f7f2"/>
<text class="mid b" x="1025" y="489" style="font-size:14px;fill:#14b88a">B</text>
<text class="mid" x="1054" y="489" style="font-size:15px;font-style:italic;fill:#444;font-family:'Liberation Serif',serif">I</text>
<path class="i" d="M1079 482v6a4 4 0 0 0 8 0v-6M1078 498h10"/>
<text class="mid" x="1110" y="487" style="font-size:13px;fill:#333">A</text><rect x="1103" y="494" width="14" height="3" fill="#e11"/>
<path d="M1122 488h5l-2.500 3z" fill="#888"/>
<path class="i" d="M1143 493l2 0 5-6-3-2-5 6zM1142 495h4"/>
<path d="M1159 488h5l-2.500 3z" fill="#888"/>
<path d="M1187 480l4 4-3 3-2-1-4 6-3 1-3-3 1-3 6-4-1-2z" fill="#333"/>
<rect x="1220.500" y="459.500" width="15" height="15" rx="1" fill="none" stroke="#444" stroke-width="1.400"/>
<circle cx="1264" cy="467" r="10" fill="#f5c75c"/>
<path d="M1294 460h12v14" fill="none" stroke="#333" stroke-width="1.600"/><path d="M1294 460v14h6" fill="none" stroke="#333" stroke-width="1.600"/><circle cx="1307" cy="474" r="5" fill="#f5c75c"/>
<path class="i" d="M1346.500 461h5v4h-5zM1341 472h5v4h-5zM1351 472h5v4h-5zM1349 465v3M1343.500 472v-3h11v3"/>
<path class="i" d="M1377 467h3c3 0 3-6 6-6h2M1380 467c3 0 3 7 6 7h2"/><circle cx="1377" cy="467" r="1.800" fill="#444"/><circle cx="1390" cy="461" r="1.800" fill="#444"/><circle cx="1390" cy="474" r="1.800" fill="#444"/>
<path d="M1414 465h14" stroke="#333" stroke-width="2.400"/><circle cx="1429" cy="473" r="5" fill="#d8d8d8"/>
<circle cx="1467" cy="467" r="1.400" fill="#333"/><circle cx="1473" cy="467" r="1.400" fill="#333"/><circle cx="1479" cy="467" r="1.400" fill="#333"/>
<path class="i" style="stroke:#b4b4b4" d="M1504 450l7 4-3 5-3-1-3 4 1-5-3-2z"/>
<path class="i" style="stroke:#999" d="M1502 493h4v-4M1510 497h-3v3"/>
<g style="font-size:12px;fill:#555">
<text class="mid" x="1228" y="493" style="fill:#555">形状</text><text class="mid" x="1264" y="493" style="fill:#555">填充</text><text class="mid" x="1300" y="493" style="fill:#555">边框</text><text class="mid" x="1349" y="493" style="fill:#555">布局</text><text class="mid" x="1385" y="493" style="fill:#555">分支</text><text class="mid" x="1422" y="493" style="fill:#555">连接线</text><text class="mid" x="1473" y="493" style="fill:#555">更多</text>
</g>

<!-- big arrow -->
<polygon points="1154,168 1156,170 1078,272 1088,273 1066,284 1071,259 1074,269" fill="#e40f0f" filter="url(#ar)"/>

<!-- chat -->
<rect x="8" y="859" width="232" height="41" rx="6" fill="#222"/>
<path d="M49 900h10l-5 6z" fill="#222"/>
<text x="20" y="880" style="font-size:12.100px;fill:#fff">亿图AI上线，快来和AI自由聊天吧</text>
<path d="M216 875l9 9M225 875l-9 9" stroke="#ddd" stroke-width="1"/>
<circle cx="62" cy="941" r="14" fill="#0fba81"/>
<rect x="54" y="936" width="16" height="11" rx="5.500" fill="#eee"/><rect x="56.500" y="938.500" width="11" height="6" rx="3" fill="#222"/><circle cx="59" cy="941.500" r="1" fill="#3fe0a0"/><circle cx="65" cy="941.500" r="1" fill="#3fe0a0"/>

<!-- watermark -->
<path d="M1770 1016c-14-10-6-22 30-27-24 6-32 16-24 22 8 4 20 0 28 6 4 6-6 13-16 13-10 0-14-8-8-12" fill="none" stroke="#69aee0" stroke-width="4" opacity=".8"/>
<path d="M1782 1008c10-6 24-3 22 6-2 7-12 8-16 12" fill="none" stroke="#6cc68a" stroke-width="6" opacity=".85"/>
<text x="1804" y="1002" class="b" style="font-size:21px;fill:#4f96d6">极光下载站</text>
<text x="1804" y="1024" style="font-size:18px;fill:#62c48e">www.xz7.com</text>
</svg>
</body></html>
